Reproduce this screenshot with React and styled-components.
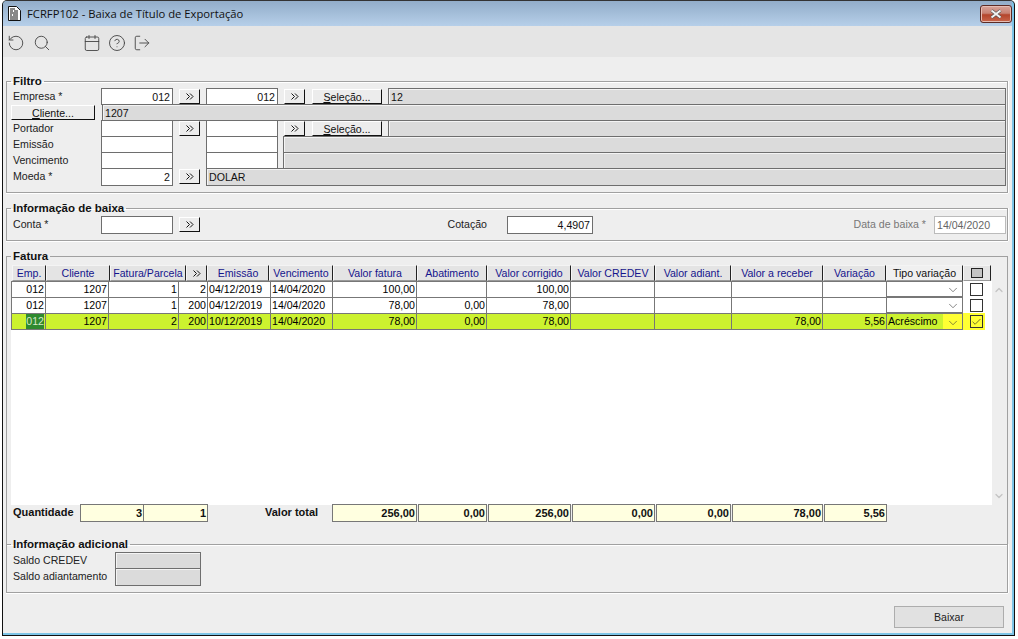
import styled, { createGlobalStyle } from 'styled-components';
import { RotateCcw, Search, Calendar, CircleHelp, LogOut, ChevronDown, ChevronUp, Check } from 'lucide-react';

const GlobalStyle = createGlobalStyle`
  html, body { margin: 0; padding: 0; background: #fff; }
  body { font-family: "Liberation Sans", Arial, sans-serif; font-size: 10.6px; color: #111; }
`;

const Win = styled.div`
  box-sizing: border-box;
  width: 1013px;
  height: 636px;
  margin: 0 0 0 2px;
  padding: 0 2px 2px 0;
  border: 1px solid #111;
  border-top-color: #333;
  border-radius: 5px 5px 0 0;
  background: #7cc4e6;
  display: flex;
  flex-direction: column;
  overflow: hidden;
`;

const TitleBar = styled.div`
  height: 25px;
  flex: none;
  display: flex;
  align-items: center;
  padding: 0 0 0 5px;
  background: linear-gradient(#92adc9, #b6cfe9);
  font-family: "Open Sans", sans-serif;
  font-size: 11.25px;
  color: #111;
  gap: 6px;
`;

const TitleText = styled.span`
  flex: 1;
`;

const CloseBtn = styled.div`
  width: 32px;
  height: 18px;
  box-sizing: border-box;
  border: 1px solid #5d2b25;
  border-radius: 3px;
  background: linear-gradient(#d8a49a 0, #c88274 45%, #b4452c 55%, #c8664c 100%);
  box-shadow: inset 0 0 0 1px #e6bdb4;
  display: flex;
  align-items: center;
  justify-content: center;
`;

const Toolbar = styled.div`
  height: 31px;
  flex: none;
  box-sizing: border-box;
  background: #e5e5e5;
  display: flex;
  align-items: center;
  color: #444;
  padding: 3px 0 0 1px;
`;

const ToolIcon = styled.span`
  width: 24px;
  height: 24px;
  display: flex;
  align-items: center;
  justify-content: center;
  margin-left: ${(p) => p.$gap || 0}px;
`;

const Body = styled.div`
  flex: 1;
  display: flex;
  flex-direction: column;
  background: #eee;
  padding: 18px 4px 0 3px;
`;

const Group = styled.fieldset`
  margin: ${(p) => p.$top || 0}px 0 0;
  padding: 0 1px 0 4px;
  height: ${(p) => p.$h}px;
  box-sizing: border-box;
  min-width: 0;
  border: none;
  border-top: 1px solid #a0a0a0;
  border-left: 1px solid #a0a0a0;
  border-right: 1px solid #a0a0a0;
  border-bottom: ${(p) => (p.$open ? 'none' : '1px solid #a0a0a0')};
  box-shadow: ${(p) => (p.$open ? 'none' : '0 1px 0 #fff,')} inset 0 1px 0 #fff, 1px 0 0 #fff;
`;

const Legend = styled.legend`
  margin-left: 0;
  padding: 0 2px;
  font-weight: bold;
  font-size: 11.5px;
  line-height: 13px;
  color: #111;
`;

const Rows = styled.div`
  padding-top: ${(p) => p.$top || 0}px;
`;

const FormRow = styled.div`
  display: flex;
  align-items: flex-start;
  height: 16px;
`;

const Label = styled.label`
  width: ${(p) => p.$w || 90}px;
  flex: none;
  line-height: 16px;
  padding-left: 2px;
  box-sizing: border-box;
  color: ${(p) => (p.$muted ? '#777' : '#222')};
  text-align: ${(p) => p.$align || 'left'};
`;

const Field = styled.div`
  box-sizing: border-box;
  width: ${(p) => (p.$w ? `${p.$w}px` : 'auto')};
  flex: ${(p) => (p.$w ? 'none' : 1)};
  height: ${(p) => p.$h || 17}px;
  margin-left: ${(p) => p.$ml || 0}px;
  border: 1px solid ${(p) => (p.$muted ? '#bbb' : '#6e6e6e')};
  background: ${(p) => (p.$ro ? '#dbdbdb' : '#fff')};
  box-shadow: ${(p) => (p.$ro ? 'inset 1px 1px 0 #f4f4f4' : 'none')};
  line-height: 16px;
  padding: 0 2px;
  text-align: ${(p) => (p.$right ? 'right' : 'left')};
  color: ${(p) => (p.$muted ? '#666' : '#111')};
  white-space: nowrap;
  overflow: hidden;
`;

const Spacer = styled.div`
  width: ${(p) => p.$w}px;
  flex: none;
`;

const PushBtn = styled.div`
  box-sizing: border-box;
  width: ${(p) => p.$w}px;
  height: 15px;
  margin: 1px 0 0 ${(p) => p.$ml || 0}px;
  flex: none;
  background: #ececec;
  border-top: 1px solid #fff;
  border-left: 1px solid #fff;
  border-right: 1px solid #111;
  border-bottom: 1px solid #111;
  display: flex;
  align-items: center;
  justify-content: center;
  color: #111;
`;

const Under = styled.u`
  text-underline-offset: 1px;
`;

const Grid = styled.div`
  display: grid;
  grid-template-columns: 981px 13px;
  margin-top: 2px;
`;

const Sheet = styled.div`
  background: #fff;
  height: 224px;
`;

const HeadRow = styled.div`
  display: flex;
  height: 16px;
  grid-column: 1 / 3;
  padding-left: 1px;
`;

const HeadCell = styled.div`
  box-sizing: border-box;
  width: ${(p) => p.$w}px;
  flex: none;
  background: ${(p) => (p.$active ? '#f0f0f0' : '#e4e4e4')};
  border-right: 1px solid #222;
  border-left: 1px solid #f6f6f6;
  border-bottom: 1px solid #999;
  border-top: 1px solid #f4f4f4;
  display: flex;
  align-items: center;
  justify-content: center;
  color: ${(p) => (p.$active ? '#111' : '#14148c')};
  white-space: nowrap;
  overflow: hidden;
`;

const Row = styled.div`
  display: flex;
  height: ${(p) => (p.$on ? 17 : 16)}px;
`;

const Cell = styled.div`
  box-sizing: border-box;
  width: ${(p) => p.$w}px;
  flex: none;
  background: ${(p) => (p.$on ? '#ccf22f' : '#fff')};
  border-top: 1px solid #777;
  border-bottom: ${(p) => (p.$on ? '1px solid #777' : 'none')};
  border-right: 1px solid #777;
  border-left: ${(p) => (p.$first ? '1px solid #777' : 'none')};
  text-align: ${(p) => (p.$left ? 'left' : 'right')};
  padding: 0 1px;
  line-height: 15px;
  color: #000;
  white-space: nowrap;
  overflow: hidden;
`;

const Picked = styled.span`
  display: inline-block;
  height: 100%;
  background: #2f8a2f;
  color: #d8e8c8;
`;

const ComboCell = styled.div`
  box-sizing: border-box;
  width: 76px;
  flex: none;
  background: ${(p) => (p.$on ? '#ffff33' : '#fff')};
  border-top: 1px solid #777;
  border-right: 1px solid #777;
  border-bottom: 1px solid #777;
  display: flex;
  align-items: stretch;
  justify-content: space-between;
  line-height: 15px;
`;

const ComboText = styled.span`
  flex: 1;
  padding-left: 1px;
  background: ${(p) => (p.$on ? '#ccf22f' : 'transparent')};
  color: #000;
`;

const ComboArrow = styled.span`
  width: 19px;
  flex: none;
  display: flex;
  align-items: center;
  justify-content: center;
  padding-top: 2px;
  box-sizing: border-box;
  color: #333;
`;

const CheckCell = styled.div`
  box-sizing: border-box;
  width: 22px;
  flex: none;
  background: ${(p) => (p.$on ? '#ffff33' : '#fff')};
  display: flex;
  align-items: center;
  padding-left: 7px;
`;

const Box = styled.span`
  box-sizing: border-box;
  width: 13px;
  height: 13px;
  border: 1px solid #333;
  display: flex;
  align-items: center;
  justify-content: center;
`;

const HeadBox = styled.span`
  box-sizing: border-box;
  width: 12px;
  height: 10px;
  border: 1px solid #222;
  background: #c4c4c4;
`;

const Scroll = styled.div`
  display: flex;
  flex-direction: column;
  justify-content: space-between;
  align-items: center;
  padding: 3px 0;
  height: 224px;
  box-sizing: border-box;
  color: #c4c4c4;
`;

const Totals = styled.div`
  display: flex;
  height: 18px;
  margin-top: -1px;
  align-items: flex-start;
  font-size: 11px;
`;

const TotalLabel = styled.div`
  width: ${(p) => p.$w}px;
  flex: none;
  font-weight: bold;
  padding-left: ${(p) => p.$pad}px;
  line-height: 16px;
  box-sizing: border-box;
`;

const TotalCell = styled.div`
  box-sizing: border-box;
  width: ${(p) => p.$w}px;
  height: 18px;
  flex: none;
  margin-left: ${(p) => p.$ml || 0}px;
  background: #ffffe0;
  border: 1px solid #777;
  border-left: ${(p) => (p.$joined ? 'none' : '1px solid #777')};
  font-weight: bold;
  text-align: right;
  padding: 0 1px;
  line-height: 16px;
`;

const Footer = styled.div`
  display: flex;
  justify-content: flex-end;
  padding: 13px 4px 0 0;
`;

const MainBtn = styled.div`
  box-sizing: border-box;
  width: 110px;
  height: 22px;
  background: #e1e1e1;
  border: 1px solid #adadad;
  display: flex;
  align-items: center;
  justify-content: center;
  color: #222;
`;

const cols = [
  ['Emp.', 34],
  ['Cliente', 64],
  ['Fatura/Parcela', 76],
  ['', 21],
  ['Emissão', 62],
  ['Vencimento', 64],
  ['Valor fatura', 84],
  ['Abatimento', 70],
  ['Valor corrigido', 84],
  ['Valor CREDEV', 84],
  ['Valor adiant.', 76],
  ['Valor a receber', 92],
  ['Variação', 63],
];

const cellW = [35, 63, 70, 29, 63, 62, 84, 70, 84, 84, 77, 91, 64];

const rows = [
  { vals: ['012', '1207', '1', '2', '04/12/2019', '14/04/2020', '100,00', '', '100,00', '', '', '', ''] },
  { vals: ['012', '1207', '1', '200', '04/12/2019', '14/04/2020', '78,00', '0,00', '78,00', '', '', '', ''] },
  { vals: ['012', '1207', '2', '200', '10/12/2019', '14/04/2020', '78,00', '0,00', '78,00', '', '', '78,00', '5,56'], on: true, tipo: 'Acréscimo' },
];

const totals = [
  ['256,00', 85, 0],
  ['0,00', 69, 1],
  ['256,00', 83, 1],
  ['0,00', 83, 1],
  ['0,00', 75, 1],
  ['78,00', 91, 1],
  ['5,56', 63, 1],
];

function DocIcon() {
  return (
    <svg width="13" height="15" viewBox="0 0 13 15">
      <path d="M.5.5h8l4 4v10H.5z" fill="#fff" stroke="#111" />
      <path d="M2 3h5M2 5h3M6 5h4M2 7h8M2 9h2M5 9h5M2 11h8M2 13h8" stroke="#111" />
    </svg>
  );
}

function CloseGlyph() {
  return (
    <svg width="12" height="10" viewBox="0 0 12 10">
      <path d="M1.5 1.5l9 7M10.5 1.5l-9 7" stroke="#555" strokeWidth="3.4" />
      <path d="M1.5 1.5l9 7M10.5 1.5l-9 7" stroke="#f2f2f2" strokeWidth="2" />
    </svg>
  );
}

function Chevrons() {
  return (
    <svg width="8" height="7" viewBox="0 0 8 7" fill="none" stroke="#111">
      <path d="M.5.5l3 3-3 3M4 .5l3 3-3 3" />
    </svg>
  );
}

function SelectBtn({ ml }) {
  return <PushBtn $w={70} $ml={ml}><span><Under>S</Under>eleção...</span></PushBtn>;
}

export default function App() {
  return (
    <>
      <GlobalStyle />
      <Win>
        <TitleBar>
          <DocIcon />
          <TitleText>FCRFP102 - Baixa de Título de Exportação</TitleText>
          <CloseBtn><CloseGlyph /></CloseBtn>
        </TitleBar>
        <Toolbar>
          <ToolIcon><RotateCcw size={18} strokeWidth={1.2} /></ToolIcon>
          <ToolIcon $gap={2}><Search size={18} strokeWidth={1.2} /></ToolIcon>
          <ToolIcon $gap={26}><Calendar size={18} strokeWidth={1.2} /></ToolIcon>
          <ToolIcon $gap={1}><CircleHelp size={18} strokeWidth={1.2} /></ToolIcon>
          <ToolIcon $gap={1}><LogOut size={18} strokeWidth={1.2} /></ToolIcon>
        </Toolbar>
        <Body>
          <Group $h={118}>
            <Legend>Filtro</Legend>
            <FormRow>
              <Label>Empresa *</Label>
              <Field $w={72} $right>012</Field>
              <PushBtn $w={21} $ml={6}><Chevrons /></PushBtn>
              <Field $w={72} $ml={6} $right>012</Field>
              <PushBtn $w={21} $ml={6}><Chevrons /></PushBtn>
              <SelectBtn ml={7} />
              <Field $ml={6} $ro>12</Field>
            </FormRow>
            <FormRow>
              <PushBtn $w={84}><span><Under>C</Under>liente...</span></PushBtn>
              <Field $ml={7} $ro>1207</Field>
            </FormRow>
            <FormRow>
              <Label>Portador</Label>
              <Field $w={72} />
              <PushBtn $w={21} $ml={6}><Chevrons /></PushBtn>
              <Field $w={72} $ml={6} />
              <PushBtn $w={21} $ml={6}><Chevrons /></PushBtn>
              <SelectBtn ml={7} />
              <Field $ml={6} $ro />
            </FormRow>
            <FormRow>
              <Label>Emissão</Label>
              <Field $w={72} />
              <Spacer $w={33} />
              <Field $w={72} />
              <Field $ml={5} $ro />
            </FormRow>
            <FormRow>
              <Label>Vencimento</Label>
              <Field $w={72} />
              <Spacer $w={33} />
              <Field $w={72} />
              <Field $ml={5} $ro />
            </FormRow>
            <FormRow>
              <Label>Moeda *</Label>
              <Field $w={72} $h={18} $right>2</Field>
              <PushBtn $w={21} $ml={6}><Chevrons /></PushBtn>
              <Field $ml={6} $h={18} $ro>DOLAR</Field>
            </FormRow>
          </Group>

          <Group $h={39} $top={9}>
            <Legend>Informação de baixa</Legend>
            <Rows $top={1}>
              <FormRow>
                <Label>Conta *</Label>
                <Field $w={72} $h={18} />
                <PushBtn $w={21} $ml={6}><Chevrons /></PushBtn>
                <Label $w={287} $align="right">Cotação</Label>
                <Field $w={86} $h={18} $ml={20} $right>4,4907</Field>
                <Label $w={333} $muted $align="right">Data de baixa *</Label>
                <Field $w={72} $h={18} $ml={8} $muted>14/04/2020</Field>
              </FormRow>
            </Rows>
          </Group>

          <Group $h={294} $top={9} $open>
            <Legend>Fatura</Legend>
            <Grid>
              <HeadRow>
                {cols.map(([name, w]) => (
                  <HeadCell key={w + name} $w={w}>{name || <Chevrons />}</HeadCell>
                ))}
                <HeadCell $w={77} $active>Tipo variação</HeadCell>
                <HeadCell $w={28}><HeadBox /></HeadCell>
              </HeadRow>
              <Sheet>
                {rows.map((row, i) => (
                  <Row key={i} $on={row.on}>
                    {row.vals.map((v, j) => (
                      <Cell key={j} $w={cellW[j]} $first={j === 0} $on={row.on} $left={j === 4 || j === 5}>
                        {row.on && j === 0 ? <Picked>{v}</Picked> : v}
                      </Cell>
                    ))}
                    <ComboCell $on={row.on}>
                      <ComboText $on={row.on}>{row.tipo}</ComboText>
                      <ComboArrow><ChevronDown size={14} strokeWidth={1} /></ComboArrow>
                    </ComboCell>
                    <CheckCell $on={row.on}>
                      <Box>{row.on && <Check size={12} strokeWidth={1.4} color="#222" />}</Box>
                    </CheckCell>
                  </Row>
                ))}
              </Sheet>
              <Scroll>
                <ChevronUp size={12} strokeWidth={2.6} />
                <ChevronDown size={12} strokeWidth={2.6} />
              </Scroll>
            </Grid>
            <Totals>
              <TotalLabel $w={69} $pad={2}>Quantidade</TotalLabel>
              <TotalCell $w={64}>3</TotalCell>
              <TotalCell $w={64} $joined>1</TotalCell>
              <TotalLabel $w={124} $pad={57}>Valor total</TotalLabel>
              {totals.map(([v, w, ml], i) => (
                <TotalCell key={i} $w={w} $ml={ml}>{v}</TotalCell>
              ))}
            </Totals>
          </Group>

          <Group $h={55} $top={-6}>
            <Legend>Informação adicional</Legend>
            <Rows $top={1}>
              <FormRow>
                <Label $w={104}>Saldo CREDEV</Label>
                <Field $w={86} $ro />
              </FormRow>
              <FormRow>
                <Label $w={104}>Saldo adiantamento</Label>
                <Field $w={86} $h={18} $ro />
              </FormRow>
            </Rows>
          </Group>

          <Footer>
            <MainBtn>Baixar</MainBtn>
          </Footer>
        </Body>
      </Win>
    </>
  );
}
